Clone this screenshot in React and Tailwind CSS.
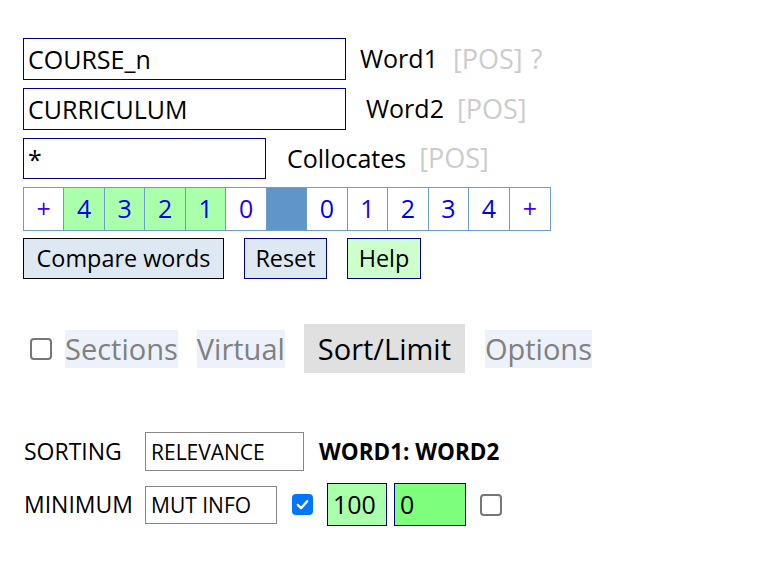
import React from "react";

const F = { fontFamily: '"Open Sans", "Noto Sans", sans-serif' };

function Cell({ children, bg = "bg-white", color = "text-[#0000ee]" }) {
  return (
    <div
      className={`w-[40.6px] h-full flex items-center justify-center border-r border-[#6d9dd0] last:border-r-0 ${bg} ${color}`}
    >
      {children}
    </div>
  );
}

function Box({ checked }) {
  if (checked) {
    return (
      <div className="w-[21px] h-[21px] rounded-[4px] bg-[#0075ff] flex items-center justify-center">
        <svg width="15" height="15" viewBox="0 0 16 16">
          <path d="M3 8.5 L6.5 12 L13 4.5" fill="none" stroke="white" strokeWidth="2.6" strokeLinecap="round" strokeLinejoin="round" />
        </svg>
      </div>
    );
  }
  return <div className="w-[22px] h-[22px] rounded-[4px] border-2 border-[#767676] bg-white" />;
}

export default function App() {
  return (
    <div className="bg-white w-[767px] h-[563px] pl-[23px] pt-[38px] text-black" style={F}>
      {/* Row 1 */}
      <div className="flex items-center h-[42px]">
        <input
          readOnly
          defaultValue="COURSE_n"
          className="w-[323px] h-[42px] border border-[#00008b] px-[4px] text-[25px] outline-none"
          style={F}
        />
        <span className="ml-[14px] text-[25px]">Word1</span>
        <span className="ml-[15px] text-[27px] text-[#cccccc]">[POS]</span>
        <span className="ml-[8px] text-[27px] text-[#cccccc]">?</span>
      </div>
      {/* Row 2 */}
      <div className="flex items-center h-[42px] mt-[8px]">
        <input
          readOnly
          defaultValue="CURRICULUM"
          className="w-[323px] h-[42px] border border-[#00008b] px-[4px] text-[25px] outline-none"
          style={F}
        />
        <span className="ml-[20px] text-[25px]">Word2</span>
        <span className="ml-[13px] text-[27px] text-[#cccccc]">[POS]</span>
      </div>
      {/* Row 3 */}
      <div className="flex items-center h-[41px] mt-[8px]">
        <input
          readOnly
          defaultValue="*"
          className="w-[243px] h-[41px] border border-[#00008b] px-[4px] text-[25px] outline-none"
          style={F}
        />
        <span className="ml-[21px] text-[25px]">Collocates</span>
        <span className="ml-[13px] text-[27px] text-[#cccccc]">[POS]</span>
      </div>
      {/* Number grid */}
      <div className="flex w-[528px] h-[44px] mt-[8px] border border-[#6d9dd0] text-[25px]">
        <Cell color="text-[#4a00e8]">+</Cell>
        <Cell bg="bg-[#aaffaa]">4</Cell>
        <Cell bg="bg-[#aaffaa]">3</Cell>
        <Cell bg="bg-[#aaffaa]">2</Cell>
        <Cell bg="bg-[#aaffaa]">1</Cell>
        <Cell color="text-[#2200ee]">0</Cell>
        <Cell bg="bg-[#5f95c8]"></Cell>
        <Cell>0</Cell>
        <Cell color="text-[#2200ee]">1</Cell>
        <Cell>2</Cell>
        <Cell>3</Cell>
        <Cell>4</Cell>
        <Cell color="text-[#4a00e8]">+</Cell>
      </div>
      {/* Buttons */}
      <div className="flex mt-[7px] h-[41px] text-[23.4px]">
        <div className="w-[201px] h-full border border-black bg-[#dde8f3] flex items-center justify-center">
          Compare words
        </div>
        <div className="ml-[20px] w-[83px] h-full border border-[#00008b] bg-[#dde8f3] flex items-center justify-center">
          Reset
        </div>
        <div className="ml-[20px] w-[74px] h-full border border-[#00008b] bg-[#ccffcc] flex items-center justify-center">
          Help
        </div>
      </div>
      {/* Tabs */}
      <div className="flex items-center mt-[45px] h-[49px] text-[29px] leading-[38px]">
        <div className="ml-[7px]">
          <Box />
        </div>
        <span className="ml-[13px] bg-[#edf2fa] text-[#808080]">Sections</span>
        <span className="ml-[19px] bg-[#edf2fa] text-[#808080]">Virtual</span>
        <span className="ml-[19px] h-[49px] px-[14px] flex items-center bg-[#e0e0e0] text-black">Sort/Limit</span>
        <span className="ml-[20px] bg-[#edf2fa] text-[#808080]">Options</span>
      </div>
      {/* Sorting */}
      <div className="flex items-center mt-[59px] h-[39px]">
        <span className="w-[122px] pl-[1px] text-[23px]">SORTING</span>
        <input
          readOnly
          defaultValue="RELEVANCE"
          className="w-[159px] h-[39px] border border-[#888888] px-[5px] text-[21px] outline-none"
          style={F}
        />
        <span className="ml-[15px] font-bold text-[22.5px]">WORD1: WORD2</span>
      </div>
      {/* Minimum */}
      <div className="flex items-center mt-[12px] h-[43px]">
        <span className="w-[122px] pl-[1px] text-[23px]">MINIMUM</span>
        <input
          readOnly
          defaultValue="MUT INFO"
          className="w-[132px] h-[38px] border border-[#888888] px-[5px] text-[21px] outline-none"
          style={F}
        />
        <div className="ml-[15px]">
          <Box checked />
        </div>
        <div className="ml-[14px] w-[60px] h-[43px] border border-[#00008b] bg-[#aaffaa] flex items-center px-[5px] text-[25px]">
          100
        </div>
        <div className="ml-[7px] w-[72px] h-[43px] border border-[#00008b] bg-[#7dff7d] flex items-center px-[5px] text-[25px]">
          0
        </div>
        <div className="ml-[14px]">
          <Box />
        </div>
      </div>
    </div>
  );
}
